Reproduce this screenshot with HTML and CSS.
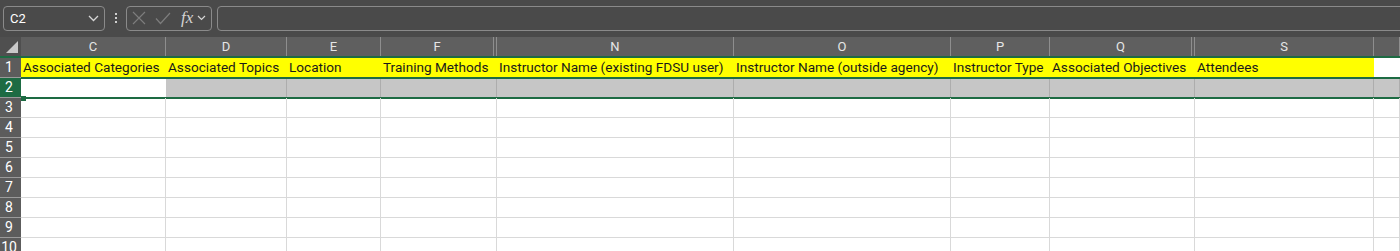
FILE: index.html
```html
<!DOCTYPE html>
<html lang="en">
<head>
    <meta charset="UTF-8">
    <title>Sheet1</title>
    <link rel="stylesheet" href="styles.css">
</head>
<body>
    <div class="formula-bar">
        <div class="name-box">
            <span>C2</span>
            <svg class="chev" width="11" height="7" viewBox="0 0 11 7"><path d="M1 1l4.5 4.5L10 1" fill="none" stroke="#d6d6d6" stroke-width="1.3"/></svg>
        </div>
        <div class="dots"><i></i><i></i><i></i></div>
        <div class="fx-box">
            <svg width="14" height="14" viewBox="0 0 14 14"><path d="M1 1l12 12M13 1L1 13" fill="none" stroke="#7d7d7d" stroke-width="1.2"/></svg>
            <svg width="16" height="13" viewBox="0 0 16 13"><path d="M1 6.5l4.5 5L15 1" fill="none" stroke="#7d7d7d" stroke-width="1.2"/></svg>
            <span class="fx">fx</span>
            <svg width="9" height="6" viewBox="0 0 9 6"><path d="M1 1l3.5 3.5L8 1" fill="none" stroke="#d6d6d6" stroke-width="1.2"/></svg>
        </div>
        <div class="formula-input"></div>
    </div>

    <div class="sheet">
        <div class="row head">
            <div class="corner"><span class="tri"></span></div>
            <div>C</div><div>D</div><div>E</div><div>F</div><div class="hid"></div>
            <div>N</div><div>O</div><div>P</div><div>Q</div><div class="hid"></div>
            <div>S</div><div></div>
        </div>

        <div class="row fill">
            <div class="num">1</div>
            <div>Associated Categories</div>
            <div>Associated Topics</div>
            <div>Location</div>
            <div>Training Methods</div>
            <div></div>
            <div>Instructor Name (existing FDSU user)</div>
            <div>Instructor Name (outside agency)</div>
            <div>Instructor Type</div>
            <div>Associated Objectives</div>
            <div></div>
            <div>Attendees</div>
            <div class="blank"></div>
        </div>

        <div class="row picked">
            <div class="num on">2</div>
            <div class="active"></div><div></div><div></div><div class="join"></div><div class="hid"></div>
            <div></div><div></div><div></div><div class="join"></div><div class="hid"></div>
            <div></div><div></div>
            <span class="handle"></span>
        </div>

        <div class="row"><div class="num">3</div><div></div><div></div><div></div><div class="join"></div><div class="hid"></div><div></div><div></div><div></div><div class="join"></div><div class="hid"></div><div></div><div></div></div>
        <div class="row"><div class="num">4</div><div></div><div></div><div></div><div class="join"></div><div class="hid"></div><div></div><div></div><div></div><div class="join"></div><div class="hid"></div><div></div><div></div></div>
        <div class="row"><div class="num">5</div><div></div><div></div><div></div><div class="join"></div><div class="hid"></div><div></div><div></div><div></div><div class="join"></div><div class="hid"></div><div></div><div></div></div>
        <div class="row"><div class="num">6</div><div></div><div></div><div></div><div class="join"></div><div class="hid"></div><div></div><div></div><div></div><div class="join"></div><div class="hid"></div><div></div><div></div></div>
        <div class="row"><div class="num">7</div><div></div><div></div><div></div><div class="join"></div><div class="hid"></div><div></div><div></div><div></div><div class="join"></div><div class="hid"></div><div></div><div></div></div>
        <div class="row"><div class="num">8</div><div></div><div></div><div></div><div class="join"></div><div class="hid"></div><div></div><div></div><div></div><div class="join"></div><div class="hid"></div><div></div><div></div></div>
        <div class="row"><div class="num">9</div><div></div><div></div><div></div><div class="join"></div><div class="hid"></div><div></div><div></div><div></div><div class="join"></div><div class="hid"></div><div></div><div></div></div>
        <div class="row"><div class="num">10</div><div></div><div></div><div></div><div class="join"></div><div class="hid"></div><div></div><div></div><div></div><div class="join"></div><div class="hid"></div><div></div><div></div></div>
    </div>
</body>
</html>
```

FILE: styles.css
```css
* {
    box-sizing: border-box;
}
body {
    margin: 0;
    width: 1400px;
    height: 251px;
    overflow: hidden;
    background-color: #ffffff;
    font-family: Roboto, "Liberation Sans", Arial, sans-serif;
}

/* Formula bar */
.formula-bar {
    display: flex;
    align-items: center;
    height: 37px;
    padding: 0 0 1px 3px;
    background-color: #4a4a4a;
}
.name-box {
    display: flex;
    align-items: center;
    justify-content: space-between;
    width: 102px;
    height: 25px;
    padding: 0 5px 0 6px;
    border: 1px solid #8a8a8a;
    border-radius: 4px;
    color: #ffffff;
    font-size: 13px;
}
.dots {
    display: flex;
    flex-direction: column;
    gap: 2px;
    width: 21px;
    align-items: center;
}
.dots i {
    display: block;
    width: 2px;
    height: 2px;
    background-color: #d0d0d0;
}
.fx-box {
    display: flex;
    align-items: center;
    gap: 9px;
    width: 86px;
    height: 25px;
    padding: 0 4px 0 5px;
    border: 1px solid #8a8a8a;
    border-radius: 4px;
}
.fx-box .fx {
    margin-left: 1px;
    margin-right: -5px;
    color: #d4d4d4;
    font-family: "Liberation Serif", serif;
    font-style: italic;
    font-size: 17px;
}
.formula-input {
    flex: 1;
    height: 25px;
    margin: 0 -10px 0 5px;
    border: 1px solid #8a8a8a;
    border-radius: 4px;
}

/* Grid */
.row {
    position: relative;
    display: grid;
    grid-template-columns: 21px 145px 121px 94px 113px 3px 237px 217px 99px 142px 3px 179px 1fr;
    height: 20px;
}
.row > div {
    border-right: 1px solid #d9d9d9;
    border-bottom: 1px solid #d9d9d9;
}
.row > .join {
    border-right: none;
}
.row > .num {
    padding-right: 3px;
    background-color: #5c5c5c;
    border-right: none;
    border-bottom: 1px solid #9a9a9a;
    color: #ffffff;
    font-size: 14px;
    line-height: 19px;
    text-align: center;
}
.row > .num.on {
    background-color: #1d6b43;
}

.head {
    height: 21px;
    border-bottom: 2px solid #1d6b43;
}
.head > div {
    background-color: #5f5f5f;
    border-right: 1px solid #8e8e8e;
    border-bottom: none;
    color: #e6e6e6;
    font-size: 13px;
    line-height: 19px;
    text-align: center;
}
.head .corner {
    position: relative;
    border-right: none;
    background-color: #4f4f4f;
}
.tri {
    position: absolute;
    right: 3px;
    bottom: 3px;
    width: 0;
    height: 0;
    border-left: 12px solid transparent;
    border-bottom: 12px solid #c9c9c9;
}

.fill > div {
    background-color: #ffff00;
    border-right: none;
    border-bottom: none;
    padding-left: 2px;
    color: #1a1a1a;
    font-size: 13.6px;
    line-height: 19px;
    white-space: nowrap;
}
.fill > .num {
    background-color: #5c5c5c;
    padding-left: 0;
    color: #ffffff;
    font-size: 14px;
}
.fill > .blank {
    background-color: #ffffff;
}

.picked > div {
    background-color: #c6c6c6;
    border-right-color: #adadad;
}
.picked > .active {
    background-color: #ffffff;
    border-right: none;
}
.picked::after {
    content: "";
    position: absolute;
    left: 21px;
    right: 0;
    top: -1px;
    bottom: -1px;
    border-top: 2px solid #1d6b43;
    border-bottom: 2px solid #1d6b43;
}
.handle {
    position: absolute;
    left: 21px;
    bottom: -3px;
    z-index: 2;
    width: 5px;
    height: 5px;
    background-color: #1d6b43;
}
```
